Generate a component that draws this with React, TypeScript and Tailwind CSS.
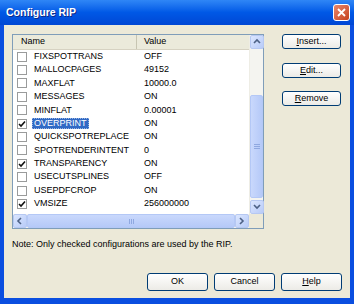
import React from "react";

const rows: { name: string; value: string; checked: boolean; selected?: boolean }[] = [
  { name: "FIXSPOTTRANS", value: "OFF", checked: false },
  { name: "MALLOCPAGES", value: "49152", checked: false },
  { name: "MAXFLAT", value: "10000.0", checked: false },
  { name: "MESSAGES", value: "ON", checked: false },
  { name: "MINFLAT", value: "0.00001", checked: false },
  { name: "OVERPRINT", value: "ON", checked: true, selected: true },
  { name: "QUICKSPOTREPLACE", value: "ON", checked: false },
  { name: "SPOTRENDERINTENT", value: "0", checked: false },
  { name: "TRANSPARENCY", value: "ON", checked: true },
  { name: "USECUTSPLINES", value: "OFF", checked: false },
  { name: "USEPDFCROP", value: "ON", checked: false },
  { name: "VMSIZE", value: "256000000", checked: true },
];

function Chevron({ dir }: { dir: "up" | "down" | "left" | "right" }) {
  const pts = {
    up: "1,5 4,2 7,5",
    down: "1,2 4,5 7,2",
    left: "5,1 2,4 5,7",
    right: "2,1 5,4 2,7",
  }[dir];
  return (
    <svg width="8" height="8" viewBox="0 0 8 8">
      <polyline points={pts} fill="none" stroke="#4d6185" strokeWidth="1.6" />
    </svg>
  );
}

function ArrowBtn({ dir }: { dir: "up" | "down" | "left" | "right" }) {
  return (
    <div className="w-[14px] h-[14px] flex items-center justify-center rounded-[2px] border border-[#b6c8f2] bg-gradient-to-br from-[#dbe6fe] to-[#b8cbf8]">
      <Chevron dir={dir} />
    </div>
  );
}

function Check({ on }: { on: boolean }) {
  return (
    <div className="w-[10px] h-[10px] border border-[#9a9b9b] bg-white flex items-center justify-center">
      {on && (
        <svg width="8" height="8" viewBox="0 0 8 8">
          <polyline points="1,4 3,6 7,1.5" fill="none" stroke="#111" strokeWidth="1.6" />
        </svg>
      )}
    </div>
  );
}

function XpButton({ children, w, h }: { children: React.ReactNode; w: string; h: string }) {
  return (
    <div
      className={`${w} ${h} flex items-center justify-center rounded-[3px] border border-[#003c74] bg-gradient-to-b from-white to-[#ecebe6] text-[9px] text-black`}
    >
      {children}
    </div>
  );
}

export default function App() {
  return (
    <div
      className="w-[354px] h-[304px] flex flex-col bg-[#0a4ee0] overflow-hidden"
      style={{ fontFamily: "'Liberation Sans', Arial, sans-serif" }}
    >
      {/* Title bar */}
      <div className="h-[25px] flex items-center justify-between pl-[6px] pr-[4px] bg-gradient-to-b from-[#2f86f6] via-[#0058e6] to-[#0047d4]">
        <span className="text-white font-bold text-[10.5px] [text-shadow:1px_1px_0_#0a2a8a]">Configure RIP</span>
        <div className="w-[17px] h-[17px] rounded-[3px] border border-white bg-gradient-to-br from-[#e8866a] to-[#c5401a] flex items-center justify-center">
          <svg width="9" height="9" viewBox="0 0 9 9">
            <path d="M1 1 L8 8 M8 1 L1 8" stroke="white" strokeWidth="1.8" />
          </svg>
        </div>
      </div>

      {/* Body */}
      <div className="flex-1 mx-[4px] mb-[6px] bg-[#ece9d8] pt-[9px] pl-[8px] flex flex-col">
        <div className="flex">
          {/* List box */}
          <div className="w-[252px] h-[195px] border border-[#7f9db9] bg-white flex flex-col">
            <div className="flex flex-1 min-h-0">
              <div className="flex-1 flex flex-col">
                {/* Header */}
                <div className="h-[15px] flex bg-[#ebeadb] border-b border-[#d6d2c2] text-[9px] text-black">
                  <div className="w-[124px] flex items-center pl-[8px] border-r border-[#c7c5b2]">Name</div>
                  <div className="flex-1 flex items-center pl-[7px]">Value</div>
                </div>
                {/* Rows */}
                <div className="flex flex-col text-[9px] text-black">
                  {rows.map((r) => (
                    <div key={r.name} className="h-[13.4px] flex items-center">
                      <div className="w-[124px] flex items-center pl-[4px]">
                        <Check on={r.checked} />
                        <span
                          className={
                            r.selected
                              ? "ml-[5px] px-[2px] h-[11px] leading-[11px] bg-[#316ac5] text-white outline-1 outline-dotted outline-[#9bb5e0] -outline-offset-1"
                              : "ml-[7px]"
                          }
                        >
                          {r.name}
                        </span>
                      </div>
                      <div className="flex-1 pl-[7px]">{r.value}</div>
                    </div>
                  ))}
                </div>
              </div>
              {/* Vertical scrollbar */}
              <div className="w-[14px] flex flex-col bg-[#f4f4f0] border-l border-[#eeede5]">
                <ArrowBtn dir="up" />
                <div className="h-[46px]" />
                <div className="h-[103px] rounded-[2px] border border-[#b4c8f6] bg-gradient-to-r from-[#c9d8fc] to-[#b5c9f8] flex items-center justify-center">
                  <div className="flex flex-col gap-[1px]">
                    <div className="w-[6px] h-px bg-[#8fa8e0]" />
                    <div className="w-[6px] h-px bg-[#8fa8e0]" />
                    <div className="w-[6px] h-px bg-[#8fa8e0]" />
                  </div>
                </div>
                <div className="flex-1" />
                <ArrowBtn dir="down" />
              </div>
            </div>
            {/* Horizontal scrollbar */}
            <div className="h-[14px] flex bg-[#f4f4f0]">
              <ArrowBtn dir="left" />
              <div className="w-[208px] rounded-[2px] border border-[#b4c8f6] bg-gradient-to-b from-[#c9d8fc] to-[#b5c9f8] flex items-center justify-center">
                <div className="flex gap-[1px]">
                  <div className="w-px h-[5px] bg-[#8fa8e0]" />
                  <div className="w-px h-[5px] bg-[#8fa8e0]" />
                  <div className="w-px h-[5px] bg-[#8fa8e0]" />
                </div>
              </div>
              <ArrowBtn dir="right" />
              <div className="flex-1 bg-[#ece9d8]" />
            </div>
          </div>

          {/* Side buttons */}
          <div className="ml-[18px] flex flex-col">
            <XpButton w="w-[59px]" h="h-[15px]">
              <span><span className="underline">I</span>nsert...</span>
            </XpButton>
            <div className="mt-[14px]">
              <XpButton w="w-[59px]" h="h-[15px]">
                <span><span className="underline">E</span>dit...</span>
              </XpButton>
            </div>
            <div className="mt-[13px]">
              <XpButton w="w-[59px]" h="h-[15px]">
                <span><span className="underline">R</span>emove</span>
              </XpButton>
            </div>
          </div>
        </div>

        <div className="mt-[10px] text-[9px] text-black leading-[11px]">
          Note: Only checked configurations are used by the RIP.
        </div>

        <div className="mt-[23px] flex gap-[6px] pl-[135px]">
          <XpButton w="w-[61px]" h="h-[18px]">OK</XpButton>
          <XpButton w="w-[61px]" h="h-[18px]">Cancel</XpButton>
          <XpButton w="w-[61px]" h="h-[18px]">
            <span><span className="underline">H</span>elp</span>
          </XpButton>
        </div>
      </div>
    </div>
  );
}
